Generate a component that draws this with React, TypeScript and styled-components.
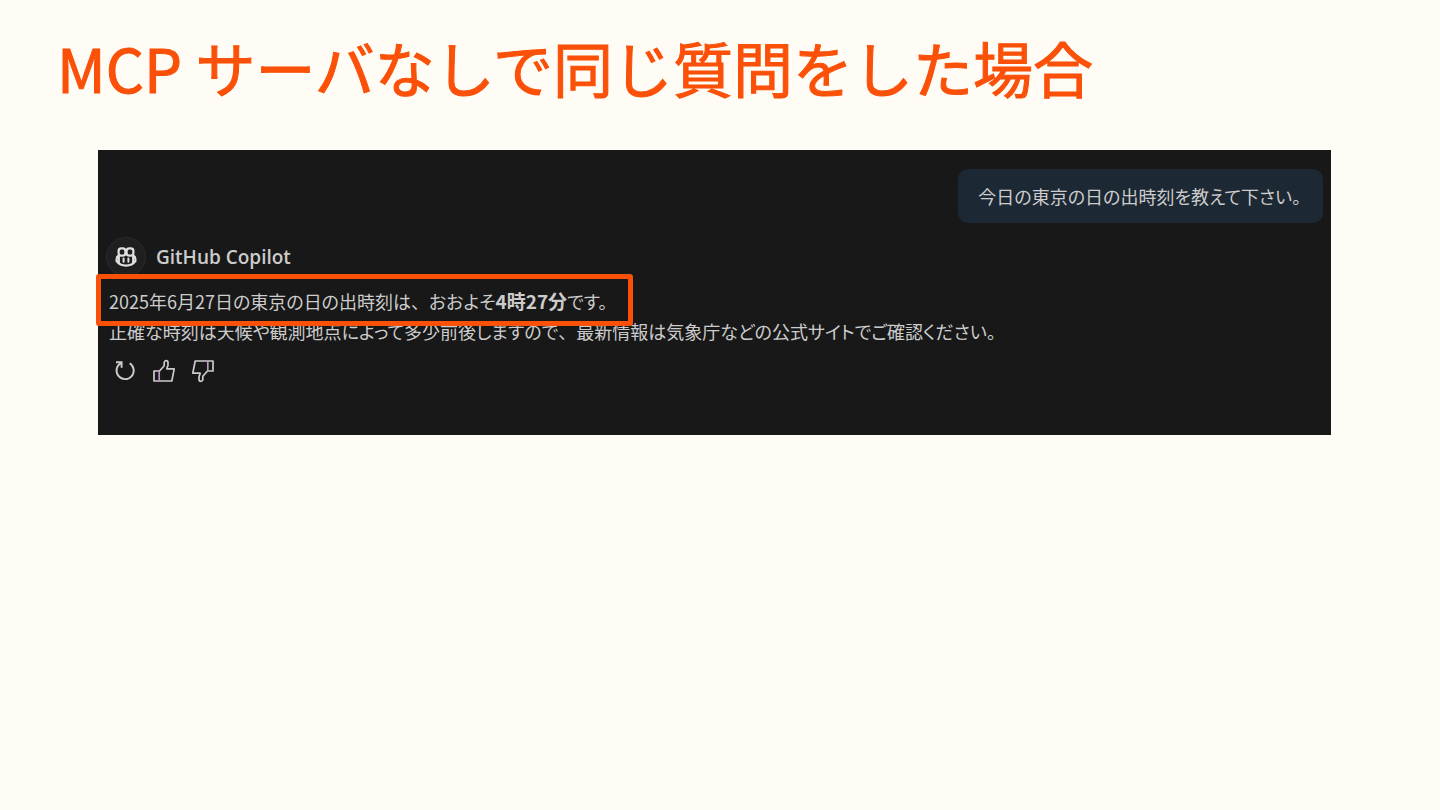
import React from 'react';
import styled, { createGlobalStyle } from 'styled-components';

const GlobalStyle = createGlobalStyle`
  *, *::before, *::after { box-sizing: border-box; }
  body {
    margin: 0;
    background: #fffcf5;
  }
`;

const accent = '#fa5008';

const Slide = styled.main`
  min-height: 100vh;
  padding: 23px 109px 48px 98px;
  background: #fffcf5;
`;

const Title = styled.h1`
  margin: 0 0 39px -41px;
  color: ${accent};
  font: 400 60px/88px 'Noto Sans CJK JP', sans-serif;
  -webkit-text-stroke: 1px ${accent};
`;

const ChatPanel = styled.section`
  display: flex;
  flex-direction: column;
  padding: 19px 8px 52px;
  background: #181818;
  color: #cccccc;
  font: 400 18px/30px 'Noto Sans CJK JP', sans-serif;
  font-feature-settings: 'palt';
`;

const UserBubble = styled.p`
  align-self: flex-end;
  margin: 0;
  padding: 12px 22px 12px 20px;
  border-radius: 10px;
  background: #1c2833;
`;

const Reply = styled.article`
  display: flex;
  flex-direction: column;
  margin-top: 14px;
`;

const Author = styled.header`
  display: flex;
  align-items: center;
  gap: 10px;
`;

const Avatar = styled.span`
  display: flex;
  align-items: center;
  justify-content: center;
  width: 40px;
  height: 40px;
  border: 1px solid #2b2b2b;
  border-radius: 50%;
  background: #1f1f1f;
`;

const AuthorName = styled.h2`
  margin: 0;
  font: 600 19px/30px 'Open Sans', sans-serif;
`;

const Answer = styled.p`
  margin: 9px 0 0 3px;
`;

const Time = styled.strong`
  font-size: 19px;
`;

/* A comma that keeps its full-width space after it. */
const Comma = styled.span`
  font-feature-settings: normal;
`;

const Highlighted = styled.span`
  position: relative;
  display: block;
  width: fit-content;

  &::after {
    content: '';
    position: absolute;
    inset: -12px -26px -10px -13px;
    border: 5px solid ${accent};
    border-radius: 3px;
  }
`;

const Feedback = styled.div`
  display: flex;
  gap: 15px;
  margin: 13px 0 0 7px;
`;

const IconButton = styled.button`
  display: flex;
  padding: 0;
  border: 0;
  background: none;
  color: inherit;
`;

const CopilotIcon = () => (
  <svg width="22" height="22" viewBox="0 0 22 22" fill="none" stroke="#e0e0e0" strokeWidth="2.2" strokeLinejoin="round" aria-hidden="true">
    <rect x="3.6" y="2.4" width="6.8" height="7.2" rx="2.6" />
    <rect x="11.6" y="2.4" width="6.8" height="7.2" rx="2.6" />
    <path d="M3.8 9.4C2.2 10.2 1.6 11.4 1.6 13V15.2C3.6 18 7.2 19.6 11 19.6S18.4 18 20.4 15.2V13C20.4 11.4 19.8 10.2 18.2 9.4" />
    <path d="M3.8 9.6V17M18.2 9.6V17" />
    <path d="M8.6 12.4V15.8M13.4 12.4V15.8" strokeWidth="2" strokeLinecap="round" />
  </svg>
);

const RetryIcon = () => (
  <svg width="24" height="24" viewBox="0 0 24 24" fill="none" stroke="currentColor" strokeWidth="1.9" aria-hidden="true">
    <path d="M3 3.2H8.6V8.8" />
    <path d="M8.4 3.8A8.6 8.6 0 1 0 16.6 4.2" />
  </svg>
);

const ThumbShape = () => (
  <>
    <path d="M2 12H7.5L12.2 6.8V3.6A1.9 1.9 0 0 1 16 3.6V6.2L14.8 9.8H22.2L19.8 22H2Z" />
    <path d="M7.2 12V22" stroke="#b89ac0" />
  </>
);

const ThumbsUpIcon = () => (
  <svg width="24" height="24" viewBox="0 0 24 24" fill="none" stroke="currentColor" strokeWidth="1.7" strokeLinejoin="round" aria-hidden="true">
    <ThumbShape />
  </svg>
);

const ThumbsDownIcon = () => (
  <svg width="24" height="24" viewBox="0 0 24 24" fill="none" stroke="currentColor" strokeWidth="1.7" strokeLinejoin="round" aria-hidden="true">
    <g transform="rotate(180 12 12)">
      <ThumbShape />
    </g>
  </svg>
);

export default function App() {
  return (
    <Slide lang="ja">
      <GlobalStyle />
      <Title>MCP サーバなしで同じ質問をした場合</Title>
      <ChatPanel>
        <UserBubble>今日の東京の日の出時刻を教えて下さい。</UserBubble>
        <Reply>
          <Author>
            <Avatar>
              <CopilotIcon />
            </Avatar>
            <AuthorName>GitHub Copilot</AuthorName>
          </Author>
          <Answer>
            <Highlighted>
              2025年6月27日の東京の日の出時刻は<Comma>、</Comma>おおよそ<Time>4時27分</Time>です。
            </Highlighted>
            正確な時刻は天候や観測地点によって多少前後しますので<Comma>、</Comma>最新情報は気象庁などの公式サイトでご確認ください。
          </Answer>
          <Feedback>
            <IconButton type="button" aria-label="再試行">
              <RetryIcon />
            </IconButton>
            <IconButton type="button" aria-label="役に立った">
              <ThumbsUpIcon />
            </IconButton>
            <IconButton type="button" aria-label="役に立たなかった">
              <ThumbsDownIcon />
            </IconButton>
          </Feedback>
        </Reply>
      </ChatPanel>
    </Slide>
  );
}
